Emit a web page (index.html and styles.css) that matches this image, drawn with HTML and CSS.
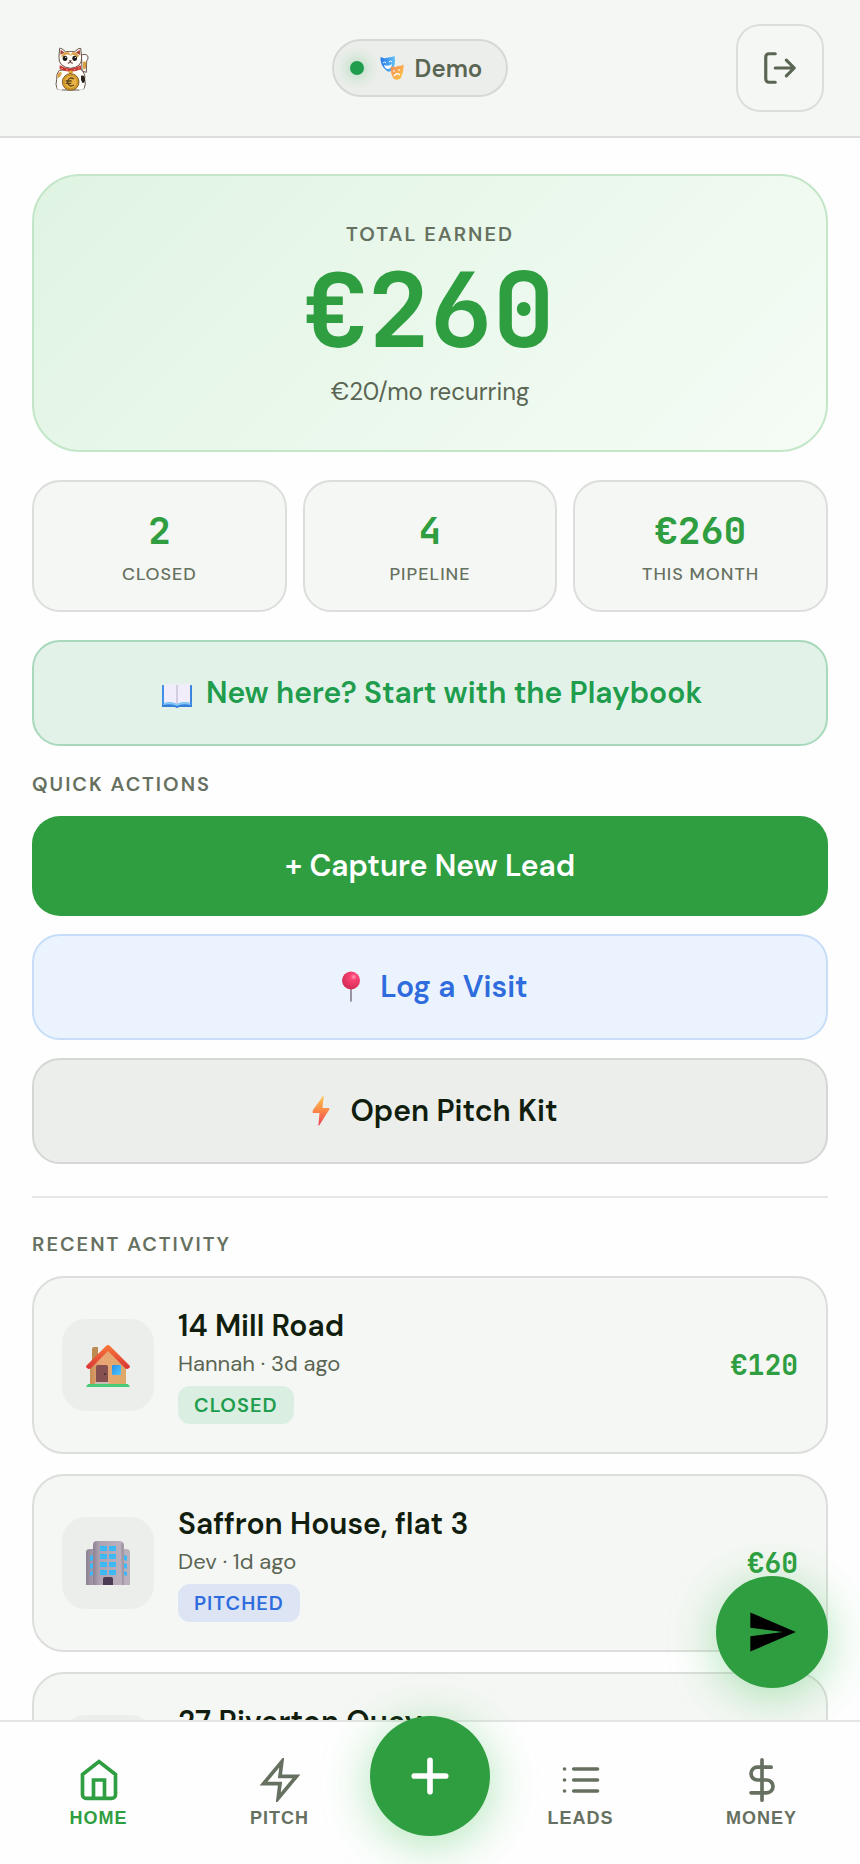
FILE: index.html
```html
<!DOCTYPE html>
<html lang="en">
<head>
<meta charset="utf-8">
<meta name="viewport" content="width=device-width, initial-scale=1">
<title>Home</title>
<link rel="stylesheet" href="styles.css">
</head>
<body>
<div class="app">
  <header class="topbar">
    <svg class="logo" viewBox="18 13 204 204" role="img" aria-label="Lucky cat">
      <g stroke="#4a3324" stroke-width="2.5" stroke-linejoin="round">
        <path d="M156 124 L155 88 Q150 76 158 75 Q172 72 174 82 Q175 89 170 94 L169 128Z" fill="#fff"/>
        <path d="M158 96 L169 96 L168 116 L160 120Z" fill="#d9a042" stroke="none"/>
        <path d="M88 122 Q78 132 80 150 Q75 164 82 178 L100 181 H146 L162 177 Q169 164 164 148 Q168 134 152 118Z" fill="#fffdf8"/>
        <path d="M87 80 L89 56 Q94 54 106 66 H134 Q146 54 152 56 L155 82 Q157 112 122 116 Q84 112 87 80Z" fill="#fffdf8"/>
      </g>
      <path d="M91 75 L92 60 L104 69Z M137 69 L149 60 L151 76Z" fill="#a94435"/>
      <path d="M104 68 H136 L148 78 L141 84 Q132 70 122 78 Q108 70 99 82 L92 80Z" fill="#dca34c"/>
      <path d="M116 67 H127 L122 77Z" fill="#fff8e8"/>
      <path d="M81 138 Q84 128 94 126 Q98 138 84 145Z" fill="#dca34c"/>
      <path d="M153 138 Q166 134 165 152 Q163 162 157 159 Q151 150 153 138Z" fill="#29231f"/>
      <ellipse cx="105" cy="86" rx="7" ry="8" fill="#1d1a18"/>
      <ellipse cx="134" cy="86" rx="7" ry="8" fill="#1d1a18"/>
      <circle cx="107" cy="83" r="2" fill="#fff"/><circle cx="136" cy="83" r="2" fill="#fff"/>
      <path d="M118 93h6l-3 4zM121 97q-3 6-8 3M121 97q3 6 8 3" fill="#a2453b" stroke="#35251d" stroke-width="2"/>
      <path d="M89 107 Q120 126 152 107 L154 118 Q121 134 89 118Z" fill="#c83336"/>
      <path d="M94 115l5 2m9 3 5 1m18 0 5-1m8-4 5-2" stroke="#f0b85a" stroke-width="3"/>
      <circle cx="122" cy="128" r="6" fill="#dda62e"/>
      <ellipse cx="91" cy="174" rx="9" ry="6" fill="#fff"/><ellipse cx="152" cy="174" rx="9" ry="6" fill="#fff"/>
      <circle cx="122" cy="157" r="25" fill="#dfa42c" stroke="#6b4b1f" stroke-width="2.5"/>
      <circle cx="122" cy="157" r="20" fill="#e9b445" stroke="#b57b18" stroke-width="2"/>
      <path d="M132 148 Q116 139 113 157 Q116 175 132 166 M107 154h18M107 161h17" fill="none" stroke="#5b441b" stroke-width="4"/>
    </svg>
    <div class="status">
      <span class="status-dot"></span>
      <svg class="status-icon" viewBox="0 0 24 24" aria-hidden="true">
        <defs>
          <linearGradient id="mask-blue" x2="1"><stop stop-color="#2878ea"/><stop offset="1" stop-color="#63c2f7"/></linearGradient>
          <linearGradient id="mask-gold" x2="1" y2="1"><stop stop-color="#f58b5b"/><stop offset="1" stop-color="#ffc943"/></linearGradient>
        </defs>
        <path d="M.5 1Q4 3 8 1.500Q12 1 14.500 0Q16 8 13 13Q10 17 7 15Q0 10 .5 1Z" fill="url(#mask-blue)"/>
        <path d="M11 10Q15 12 18 10Q21 10 23.500 8.500Q24 16 21 22Q18 25 14 23Q10 18 11 10Z" fill="url(#mask-gold)"/>
        <path d="M3 7q1.500-2 3 0M9 6q1.500-2 3 0M13 15h2M18 14h2" stroke="#fff" fill="none"/>
        <path d="M4 9q5 2 8-1-1 5-4 5t-4-4z" fill="#fff"/>
        <path d="M14 20q3-4 6-1" stroke="#fff" stroke-width="1.500" fill="none"/>
      </svg>
      <span>Demo</span>
    </div>
    <button class="logout" type="button" aria-label="Log out">
      <svg class="stroke-icon" viewBox="0 0 24 24" aria-hidden="true"><path d="M9 21H5a2 2 0 0 1-2-2V5a2 2 0 0 1 2-2h4M16 17l5-5-5-5M21 12H9"/></svg>
    </button>
  </header>

  <main class="content">
    <section class="hero">
      <h1 class="section-label">TOTAL EARNED</h1>
      <p class="hero-amount">€260</p>
      <p class="hero-note">€20/mo recurring</p>
    </section>

    <section class="stats">
      <div class="stat"><span class="stat-value">2</span><span class="stat-label">CLOSED</span></div>
      <div class="stat"><span class="stat-value">4</span><span class="stat-label">PIPELINE</span></div>
      <div class="stat"><span class="stat-value">€260</span><span class="stat-label">THIS MONTH</span></div>
    </section>

    <button class="action action-playbook" type="button">
      <svg class="emoji" viewBox="0 0 32 32" aria-hidden="true">
        <defs><linearGradient id="cover" x2="1"><stop stop-color="#3f8de4"/><stop offset=".5" stop-color="#58b0f0"/><stop offset="1" stop-color="#3b82db"/></linearGradient></defs>
        <path d="M1 9Q1 8 2 8H30Q31 8 31 9V29H1Z" fill="url(#cover)"/>
        <path d="M1 27H31V30H18Q16 32 14 30H1Z" fill="#397dda"/>
        <path d="M3 7Q10 6 16 8Q22 6 29 7V26Q21 24 16 27Q11 24 3 26Z" fill="#f1edfb"/>
        <path d="M3 26Q11 24 16 27Q21 24 29 26L30 28Q21 26 16 29Q11 26 2 28Z" fill="#83c9f5"/>
        <path d="M16 8V27" stroke="#cac1d9" stroke-width="1.500"/>
      </svg>
      <span>New here? Start with the Playbook</span>
    </button>

    <h2 class="section-label quick-label">QUICK ACTIONS</h2>
    <div class="actions">
      <button class="action action-primary" type="button">+ Capture New Lead</button>
      <button class="action action-visit" type="button">
        <svg class="emoji" viewBox="0 0 32 32" aria-hidden="true">
          <defs><radialGradient id="pin" cx=".65" cy=".3" r=".7"><stop stop-color="#ff9ab4"/><stop offset=".25" stop-color="#fb4375"/><stop offset="1" stop-color="#d22c55"/></radialGradient></defs>
          <path d="M15 17H17V30Q16 32 15 30Z" fill="#9a93a4"/><circle cx="16" cy="9.500" r="9" fill="url(#pin)"/>
        </svg>
        <span>Log a Visit</span>
      </button>
      <button class="action action-pitch" type="button">
        <svg class="emoji" viewBox="0 0 32 32" aria-hidden="true">
          <defs><linearGradient id="bolt" x2="0" y2="1"><stop stop-color="#fcc64f"/><stop offset=".5" stop-color="#fb8648"/><stop offset="1" stop-color="#ed405a"/></linearGradient></defs>
          <path d="M18 1Q19 .5 18.500 3L17.500 13H24Q25 13.500 24 15L14.500 30Q13 32 13.500 29L14.500 18H8Q7 17.500 8 15Z" fill="url(#bolt)"/>
        </svg>
        <span>Open Pitch Kit</span>
      </button>
    </div>

    <section class="recent">
      <h2 class="section-label">RECENT ACTIVITY</h2>
      <ul class="cards">
        <li class="card">
          <div class="tile">
            <svg class="tile-icon" viewBox="0 -2 44 44" aria-hidden="true">
              <defs>
                <linearGradient id="wall" x2="1"><stop stop-color="#c78f56"/><stop offset=".3" stop-color="#eba575"/><stop offset="1" stop-color="#dda968"/></linearGradient>
                <linearGradient id="roof" x2="0" y2="1"><stop stop-color="#f97738"/><stop offset="1" stop-color="#d93437"/></linearGradient>
                <linearGradient id="pane" x2="1" y2="1"><stop stop-color="#2491ea"/><stop offset="1" stop-color="#51c6fc"/></linearGradient>
              </defs>
              <path d="M6 4Q6 2 8 2H12V16H6Z" fill="#bd8a52"/>
              <path d="M4 20 22 4 40 20V40H4Z" fill="url(#wall)"/>
              <path d="M20 1Q22-1 24 1L43 20Q45 22 43 23Q41 25 39 23L22 6 5 23Q3 25 1 23Q-1 22 1 20Z" fill="url(#roof)"/>
              <path d="M10 22Q10 20 12 20H20Q22 20 22 22V39H10Z" fill="#875050"/>
              <circle cx="19" cy="29" r="1" fill="#442b30"/>
              <rect x="26" y="20" width="9" height="10" rx="1" fill="url(#pane)"/>
              <path d="M9 37H23V40H9Z" fill="#c8beb5"/><path d="M2 39H42L44 42H0Z" fill="#48cb78"/>
            </svg>
          </div>
          <div class="card-body">
            <h3 class="card-title">14 Mill Road</h3>
            <p class="card-meta">Hannah · 3d ago</p>
            <span class="badge badge-closed">CLOSED</span>
          </div>
          <span class="card-amount">€120</span>
        </li>
        <li class="card">
          <div class="tile">
            <svg class="tile-icon" viewBox="0 -2 44 44" aria-hidden="true">
              <defs>
                <linearGradient id="tower" x2="1"><stop stop-color="#8d8292"/><stop offset=".2" stop-color="#ada2b1"/><stop offset="1" stop-color="#bcb2bc"/></linearGradient>
              </defs>
              <path d="M0 9Q0 6 4 6H40Q44 6 44 9V42H0Z" fill="url(#tower)"/>
              <path d="M7 2Q7-2 11-2H33Q38-2 38 2V42H7Z" fill="url(#tower)"/>
              <path d="M35 0Q38 0 38 3V42H36Z" fill="#a499a6"/>
              <path d="M14 3H21V8H14ZM23 3H30V8H23ZM14 11H21V16H14ZM23 11H30V16H23ZM14 19H21V24H14ZM23 19H30V24H23ZM14 27H21V32H14ZM23 27H30V32H23Z" fill="#3eb9f8"/>
              <path d="M4 13 7 12V17L4 18ZM4 21 7 20V25L4 26ZM4 29 7 28V32L4 33ZM38 12 41 13V18L38 17ZM38 20 41 21V26L38 25ZM38 28 41 29V33L38 32Z" fill="#3eb9f8"/>
              <path d="M17 36Q17 34 19 34H25Q27 34 27 36V42H17Z" fill="#4b3b55"/>
            </svg>
          </div>
          <div class="card-body">
            <h3 class="card-title">Saffron House, flat 3</h3>
            <p class="card-meta">Dev · 1d ago</p>
            <span class="badge badge-pitched">PITCHED</span>
          </div>
          <span class="card-amount">€60</span>
        </li>
        <li class="card">
          <div class="tile"></div>
          <div class="card-body">
            <h3 class="card-title">27 Riverton Quay</h3>
          </div>
        </li>
      </ul>
    </section>
  </main>

  <button class="fab" type="button" aria-label="Send">
    <svg viewBox="0 0 24 24" aria-hidden="true"><path d="M2.010 21L23 12 2.010 3 2 10l15 2-15 2z"/></svg>
  </button>

  <nav class="tabs">
    <a class="tab tab-active" href="#home">
      <svg class="tab-icon" viewBox="0 0 24 24" aria-hidden="true"><path d="M3 9l9-7 9 7v11a2 2 0 0 1-2 2H5a2 2 0 0 1-2-2zM9 22V12h6v10"/></svg>
      <span>HOME</span>
    </a>
    <a class="tab" href="#pitch">
      <svg class="tab-icon" viewBox="0 0 24 24" aria-hidden="true"><path d="M13 2L3 14h9l-1 8 10-12h-9l1-8z"/></svg>
      <span>PITCH</span>
    </a>
    <button class="add" type="button" aria-label="Add lead">
      <svg viewBox="0 0 24 24" aria-hidden="true"><path d="M12 5v14M5 12h14"/></svg>
    </button>
    <a class="tab" href="#leads">
      <svg class="tab-icon tab-icon-round" viewBox="0 0 24 24" aria-hidden="true"><path d="M8 6h13M8 12h13M8 18h13M3 6h.01M3 12h.01M3 18h.01"/></svg>
      <span>LEADS</span>
    </a>
    <a class="tab" href="#money">
      <svg class="tab-icon tab-icon-round" viewBox="0 0 24 24" aria-hidden="true"><path d="M12 1v22M17 5H9.500a3.500 3.500 0 0 0 0 7h5a3.500 3.500 0 0 1 0 7H6"/></svg>
      <span>MONEY</span>
    </a>
  </nav>
</div>
</body>
</html>
```
FILE: styles.css
```css
:root {
  --green: #2f9e41;
  --ink: #111e0e;
  --muted: #5a6553;
  --label: #667060;
  --surface: #f5f7f4;
  --surface-2: #eceeeb;
  --line: #dcdedb;
  --sans: "DM Sans", Inter, "Open Sans", sans-serif;
  --mono: "JetBrains Mono", "DejaVu Sans Mono", monospace;
}

* { box-sizing: border-box; }

body {
  margin: 0;
  background: #fefefe;
  color: var(--ink);
  font-family: var(--sans);
}

h1, h2, h3, p, ul { margin: 0; padding: 0; }
ul { list-style: none; }
button { font: inherit; cursor: pointer; }
svg { display: block; }

.app {
  position: relative;
  display: flex;
  flex-direction: column;
  height: 100vh;
}

.topbar {
  flex: none;
  display: flex;
  align-items: center;
  justify-content: space-between;
  padding: 24px 36px;
  background: var(--surface);
  border-bottom: 2px solid var(--line);
}

.logo { width: 68px; height: 68px; }

.status {
  display: flex;
  align-items: center;
  padding: 0 24px 0 16px;
  height: 58px;
  border: 2px solid #d6d9d5;
  border-radius: 29px;
  background: var(--surface-2);
  color: var(--muted);
  font-size: 24px;
  font-weight: 600;
}

.status-dot {
  width: 14px;
  height: 14px;
  border-radius: 50%;
  background: #209c4d;
  box-shadow: 0 0 16px rgba(32, 180, 77, 0.6);
}

.status-icon { width: 24px; height: 24px; margin: 0 11px 0 16px; }

.logout {
  display: grid;
  place-items: center;
  width: 88px;
  height: 88px;
  padding: 0;
  border: 2px solid var(--line);
  border-radius: 24px;
  background: transparent;
  color: var(--muted);
}

.stroke-icon {
  width: 38px;
  height: 38px;
  fill: none;
  stroke: currentColor;
  stroke-width: 2;
  stroke-linecap: round;
  stroke-linejoin: round;
}

.content {
  flex: 1;
  min-height: 0;
  overflow-y: auto;
  scrollbar-width: none;
  padding: 36px 32px 0;
}

.hero {
  padding: 44px 32px 42px;
  border: 2px solid #c3e6c8;
  border-radius: 48px;
  background: linear-gradient(135deg, #e0f4e3, #f5fcf5);
  text-align: center;
}

.section-label {
  color: var(--label);
  font-size: 20px;
  font-weight: 600;
  line-height: 28px;
  letter-spacing: 2px;
}

.hero-amount {
  margin: 10px 0 14px;
  color: var(--green);
  font: bold 104px/104px var(--mono);
}

.hero-note { color: var(--muted); font-size: 24px; line-height: 32px; }

.stats {
  display: grid;
  grid-template-columns: repeat(3, 1fr);
  gap: 16px;
  margin: 28px 0;
}

.stat {
  display: flex;
  flex-direction: column;
  align-items: center;
  gap: 8px;
  padding: 24px 8px;
  border: 2px solid var(--line);
  border-radius: 28px;
  background: var(--surface);
}

.stat-value { color: var(--green); font: bold 38px/48px var(--mono); }

.stat-label {
  color: var(--label);
  font-size: 18px;
  font-weight: 500;
  line-height: 24px;
  letter-spacing: 1px;
}

.action {
  display: flex;
  align-items: center;
  justify-content: center;
  gap: 10px;
  width: 100%;
  padding: 32px;
  border: 2px solid;
  border-radius: 28px;
  font-size: 30px;
  font-weight: 600;
  line-height: 38px;
}

.action-playbook { background: #e3f2e8; border-color: #a9d9bc; color: #209c4d; }
.action-primary { padding: 31px; border: 0; background: var(--green); color: #fff; }
.action-visit { background: #ebf4fe; border-color: #c7ddf8; color: #2f6cdd; }
.action-pitch { background: var(--surface-2); border-color: #d4d7d3; color: var(--ink); }

.emoji { width: 38px; height: 32px; }

.quick-label { margin: 24px 0 18px; }

.actions { display: flex; flex-direction: column; gap: 18px; }

.recent {
  margin-top: 32px;
  padding-top: 32px;
  border-top: 2px solid #e5e7e5;
}

.cards {
  display: flex;
  flex-direction: column;
  gap: 20px;
  margin-top: 18px;
}

.card {
  display: flex;
  align-items: center;
  gap: 24px;
  min-height: 178px;
  padding: 28px;
  border: 2px solid var(--line);
  border-radius: 32px;
  background: var(--surface);
}

.tile {
  display: grid;
  place-items: center;
  width: 92px;
  height: 92px;
  border-radius: 24px;
  background: var(--surface-2);
}

.tile-icon { width: 44px; height: 44px; overflow: visible; }

.card-body {
  flex: 1;
  min-height: 118px;
}

.card-title { font-size: 30px; font-weight: 600; line-height: 40px; }
.card-meta { color: var(--muted); font-size: 22px; line-height: 32px; margin-top: 2px; }

.badge {
  display: inline-block;
  margin-top: 6px;
  padding: 0 16px;
  border-radius: 12px;
  font-size: 20px;
  font-weight: 600;
  line-height: 38px;
  letter-spacing: 1px;
}

.badge-closed { background: #daeee1; color: #209c4d; }
.badge-pitched { background: #dde5f4; color: #2f6cdd; }

.card-amount { color: var(--green); font: bold 28px/36px var(--mono); }

.fab {
  position: absolute;
  right: 32px;
  bottom: 176px;
  display: grid;
  place-items: center;
  width: 112px;
  height: 112px;
  padding: 0;
  border: 0;
  border-radius: 50%;
  background: var(--green);
  box-shadow: 0 8px 48px rgba(52, 190, 75, 0.4);
}

.fab svg { width: 52px; height: 52px; }

.tabs {
  position: relative;
  flex: none;
  display: flex;
  height: 144px;
  padding: 0 8px;
  border-top: 2px solid #e3e5e3;
  background: rgba(254, 254, 254, 0.97);
}

.tab {
  flex: 1;
  display: flex;
  flex-direction: column;
  align-items: center;
  gap: 6px;
  padding-top: 36px;
  color: var(--label);
  font: bold 18px/20px "Liberation Sans", Arial, sans-serif;
  letter-spacing: 1px;
  text-decoration: none;
}

.tab-active { color: var(--green); }

.tab-icon {
  width: 44px;
  height: 44px;
  fill: none;
  stroke: currentColor;
  stroke-width: 2;
}

.tab-icon-round { stroke-linecap: round; }

.add {
  display: grid;
  place-items: center;
  width: 120px;
  height: 120px;
  margin-top: -6px;
  padding: 0;
  border: 0;
  border-radius: 50%;
  background: var(--green);
  box-shadow: 0 8px 48px rgba(52, 190, 75, 0.4);
}

.add svg {
  width: 54px;
  height: 54px;
  fill: none;
  stroke: #fff;
  stroke-width: 2.5;
  stroke-linecap: round;
}
```
